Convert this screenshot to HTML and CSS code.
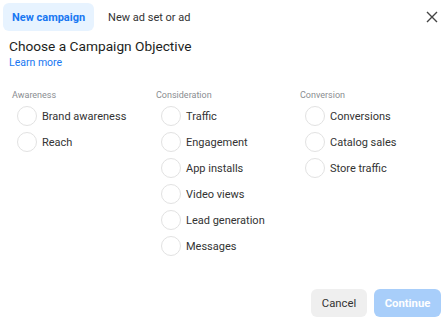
FILE: index.html
```html
<!DOCTYPE html>
<html lang="en">
<head>
    <meta charset="UTF-8">
    <meta name="viewport" content="width=device-width, initial-scale=1.0">
    <title>Create - Campaign Objective</title>
    <link rel="stylesheet" href="styles.css">
</head>
<body>
    <div class="dialog">
        <div class="tabs">
            <a class="tab active" href="#">New campaign</a>
            <a class="tab" href="#">New ad set or ad</a>
            <button class="close-btn" aria-label="Close">
                <svg width="12" height="12" viewBox="0 0 12 12">
                    <path d="M1 1 L11 11 M11 1 L1 11" stroke="#444" stroke-width="1.4" fill="none"/>
                </svg>
            </button>
        </div>

        <h1 class="title">Choose a Campaign Objective</h1>
        <a class="learn-more" href="#">Learn more</a>

        <div class="objectives">
            <div class="group">
                <div class="group-label">Awareness</div>
                <label class="option"><span class="radio"></span>Brand awareness</label>
                <label class="option"><span class="radio"></span>Reach</label>
            </div>
            <div class="group">
                <div class="group-label">Consideration</div>
                <label class="option"><span class="radio"></span>Traffic</label>
                <label class="option"><span class="radio"></span>Engagement</label>
                <label class="option"><span class="radio"></span>App installs</label>
                <label class="option"><span class="radio"></span>Video views</label>
                <label class="option"><span class="radio"></span>Lead generation</label>
                <label class="option"><span class="radio"></span>Messages</label>
            </div>
            <div class="group">
                <div class="group-label">Conversion</div>
                <label class="option"><span class="radio"></span>Conversions</label>
                <label class="option"><span class="radio"></span>Catalog sales</label>
                <label class="option"><span class="radio"></span>Store traffic</label>
            </div>
        </div>

        <div class="actions">
            <button class="cancel-btn">Cancel</button>
            <button class="continue-btn" disabled>Continue</button>
        </div>
    </div>
</body>
</html>
```

FILE: styles.css
```css
body {
    margin: 0;
    font-family: Roboto, "Liberation Sans", Arial, sans-serif;
    background-color: #fff;
    color: #1c1e21;
}

.dialog {
    width: 448px;
    height: 322px;
    padding: 3px 0 0 0;
    box-sizing: border-box;
}

.tabs {
    display: flex;
    align-items: center;
    padding: 0 3px;
    height: 28px;
}

.tab {
    display: flex;
    align-items: center;
    height: 28px;
    padding: 0 9px;
    margin-right: 5px;
    border-radius: 6px;
    font-size: 11px;
    color: #333;
    text-decoration: none;
}

.tab.active {
    background-color: #e7f3ff;
    color: #1877f2;
    font-weight: bold;
}

.close-btn {
    margin-left: auto;
    margin-right: 6px;
    background: none;
    border: none;
    padding: 0;
    width: 14px;
    height: 14px;
    display: flex;
    align-items: center;
    justify-content: center;
}

.title {
    margin: 6px 0 0 9px;
    font-size: 13.7px;
    line-height: 18px;
    font-weight: normal;
    color: #1c1e21;
}

.learn-more {
    display: block;
    margin: 1px 0 0 9px;
    font-size: 10.5px;
    line-height: 14px;
    color: #1877f2;
    text-decoration: none;
}

.objectives {
    display: flex;
    padding: 19px 0 0 12px;
    height: 170px;
}

.group {
    width: 144px;
}

.group-label {
    font-size: 9px;
    line-height: 12px;
    color: #8a8d91;
    margin-bottom: 2px;
}

.option {
    display: flex;
    align-items: center;
    height: 26px;
    font-size: 11px;
    color: #333;
}

.radio {
    width: 18px;
    height: 18px;
    border: 1px solid #e2e2e2;
    border-radius: 50%;
    margin: 0 5px 0 5px;
}

.actions {
    display: flex;
    justify-content: flex-end;
    gap: 7px;
    padding: 30px 7px 0 0;
}

.actions button {
    height: 28px;
    border: none;
    border-radius: 6px;
    font-family: inherit;
    font-size: 11.3px;
}

.cancel-btn {
    width: 56px;
    background-color: #efefef;
    color: #333;
}

.continue-btn {
    width: 67px;
    background-color: #a8cefa;
    color: #fff;
    font-weight: bold;
}
```
